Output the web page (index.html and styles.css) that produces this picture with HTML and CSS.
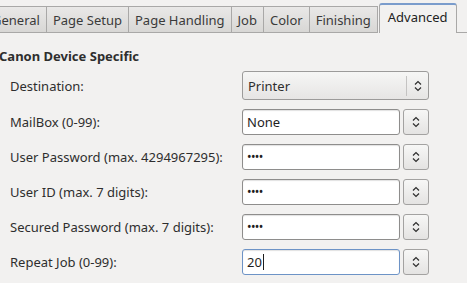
FILE: index.html
```html
<!DOCTYPE html>
<html lang="en">
<head>
    <meta charset="UTF-8">
    <title>Print - Advanced</title>
    <link rel="stylesheet" href="styles.css">
</head>
<body>
    <div class="tabs">
        <div class="tab">General</div>
        <div class="tab">Page Setup</div>
        <div class="tab">Page Handling</div>
        <div class="tab">Job</div>
        <div class="tab">Color</div>
        <div class="tab">Finishing</div>
        <div class="tab active">Advanced</div>
        <div class="tab-rest"></div>
    </div>

    <div class="page">
        <h2>Canon Device Specific</h2>

        <div class="form">
            <label>Destination:</label>
            <div class="combo">
                <span class="combo-text">Printer</span>
                <span class="combo-arrow">
                    <svg width="8" height="12" viewBox="0 0 8 12"><path d="M1 4.5L4 1.5L7 4.5M1 7.5L4 10.5L7 7.5" fill="none" stroke="#2e2e2e" stroke-width="1.2"/></svg>
                </span>
            </div>

            <label>MailBox (0-99):</label>
            <div class="spin">
                <div class="entry">None</div>
                <div class="spin-btn"><svg width="8" height="12" viewBox="0 0 8 12"><path d="M1 4.5L4 1.5L7 4.5M1 7.5L4 10.5L7 7.5" fill="none" stroke="#2e2e2e" stroke-width="1.2"/></svg></div>
            </div>

            <label>User Password (max. 4294967295):</label>
            <div class="spin">
                <div class="entry dots">&bull;&bull;&bull;&bull;</div>
                <div class="spin-btn"><svg width="8" height="12" viewBox="0 0 8 12"><path d="M1 4.5L4 1.5L7 4.5M1 7.5L4 10.5L7 7.5" fill="none" stroke="#2e2e2e" stroke-width="1.2"/></svg></div>
            </div>

            <label>User ID (max. 7 digits):</label>
            <div class="spin">
                <div class="entry dots">&bull;&bull;&bull;&bull;</div>
                <div class="spin-btn"><svg width="8" height="12" viewBox="0 0 8 12"><path d="M1 4.5L4 1.5L7 4.5M1 7.5L4 10.5L7 7.5" fill="none" stroke="#2e2e2e" stroke-width="1.2"/></svg></div>
            </div>

            <label>Secured Password (max. 7 digits):</label>
            <div class="spin">
                <div class="entry dots">&bull;&bull;&bull;&bull;</div>
                <div class="spin-btn"><svg width="8" height="12" viewBox="0 0 8 12"><path d="M1 4.5L4 1.5L7 4.5M1 7.5L4 10.5L7 7.5" fill="none" stroke="#2e2e2e" stroke-width="1.2"/></svg></div>
            </div>

            <label>Repeat Job (0-99):</label>
            <div class="spin">
                <div class="entry focus">20<span class="caret"></span></div>
                <div class="spin-btn"><svg width="8" height="12" viewBox="0 0 8 12"><path d="M1 4.5L4 1.5L7 4.5M1 7.5L4 10.5L7 7.5" fill="none" stroke="#2e2e2e" stroke-width="1.2"/></svg></div>
            </div>
        </div>
    </div>
</body>
</html>
```

FILE: styles.css
```css
body {
    margin: 0;
    background-color: #f2f1f0;
    color: #2e2e2e;
    font-family: "Noto Sans", sans-serif;
    font-size: 13px;
    overflow: hidden;
}

.tabs {
    display: flex;
    align-items: flex-end;
    height: 33px;
    margin-left: -15px;
}

.tab {
    height: 25px;
    line-height: 26px;
    padding: 0 6px;
    border: 1px solid #a9a8a7;
    border-left: none;
    background: linear-gradient(#e9e8e7, #d8d7d5);
    color: #3a3a3a;
    white-space: nowrap;
}

.tab:first-child {
    border-left: 1px solid #a9a8a7;
}

.tab.active {
    height: 28px;
    line-height: 24px;
    padding: 0 8px;
    margin-left: 1px;
    border: 1px solid #a9a8a7;
    border-top: 2px solid #7a9ccc;
    border-bottom: none;
    border-radius: 3px 3px 0 0;
    background: #f2f1f0;
    color: #222;
}

.tab-rest {
    flex: 1;
    height: 0;
    border-bottom: 1px solid #a9a8a7;
}

.page {
    padding: 0 0 0 10px;
}

h2 {
    margin: 15px 0 0 -11px;
    font-size: 13px;
    font-weight: bold;
    height: 16px;
    line-height: 16px;
}

.form {
    display: grid;
    grid-template-columns: 232px 187px;
    grid-template-rows: 29px;
    grid-auto-rows: 26px;
    row-gap: 9px;
    align-items: center;
    margin-top: 7px;
}

.form label {
    white-space: nowrap;
}

.combo {
    height: 29px;
    box-sizing: border-box;
    display: flex;
    align-items: center;
    border: 1px solid #9c9b9a;
    border-radius: 3px;
    background: linear-gradient(#f6f6f5, #e6e5e4);
}

.combo-text {
    flex: 1;
    padding-left: 5px;
}

.combo-arrow {
    width: 21px;
    height: 20px;
    border-left: 1px solid #c4c3c2;
    display: flex;
    align-items: center;
    justify-content: center;
}

.spin {
    display: flex;
    gap: 3px;
    height: 26px;
}

.entry {
    flex: 1;
    box-sizing: border-box;
    height: 26px;
    line-height: 24px;
    padding-left: 4px;
    border: 1px solid #8e8d8c;
    border-radius: 3px;
    background: #fff;
    box-shadow: inset 0 1px 1px rgba(0, 0, 0, 0.12);
    color: #1e1e1e;
}

.entry.dots {
    font-size: 12px;
    letter-spacing: -0.6px;
    padding-left: 4px;
}

.entry.focus {
    border-color: #6d93c6;
}

.caret {
    display: inline-block;
    width: 1px;
    height: 16px;
    margin-left: 1px;
    background: #1e1e1e;
    vertical-align: -3px;
}

.spin-btn {
    width: 26px;
    box-sizing: border-box;
    height: 26px;
    border: 1px solid #a3a2a1;
    border-radius: 3px;
    background: linear-gradient(#f7f7f6, #e4e3e2);
    display: flex;
    align-items: center;
    justify-content: center;
}
```
